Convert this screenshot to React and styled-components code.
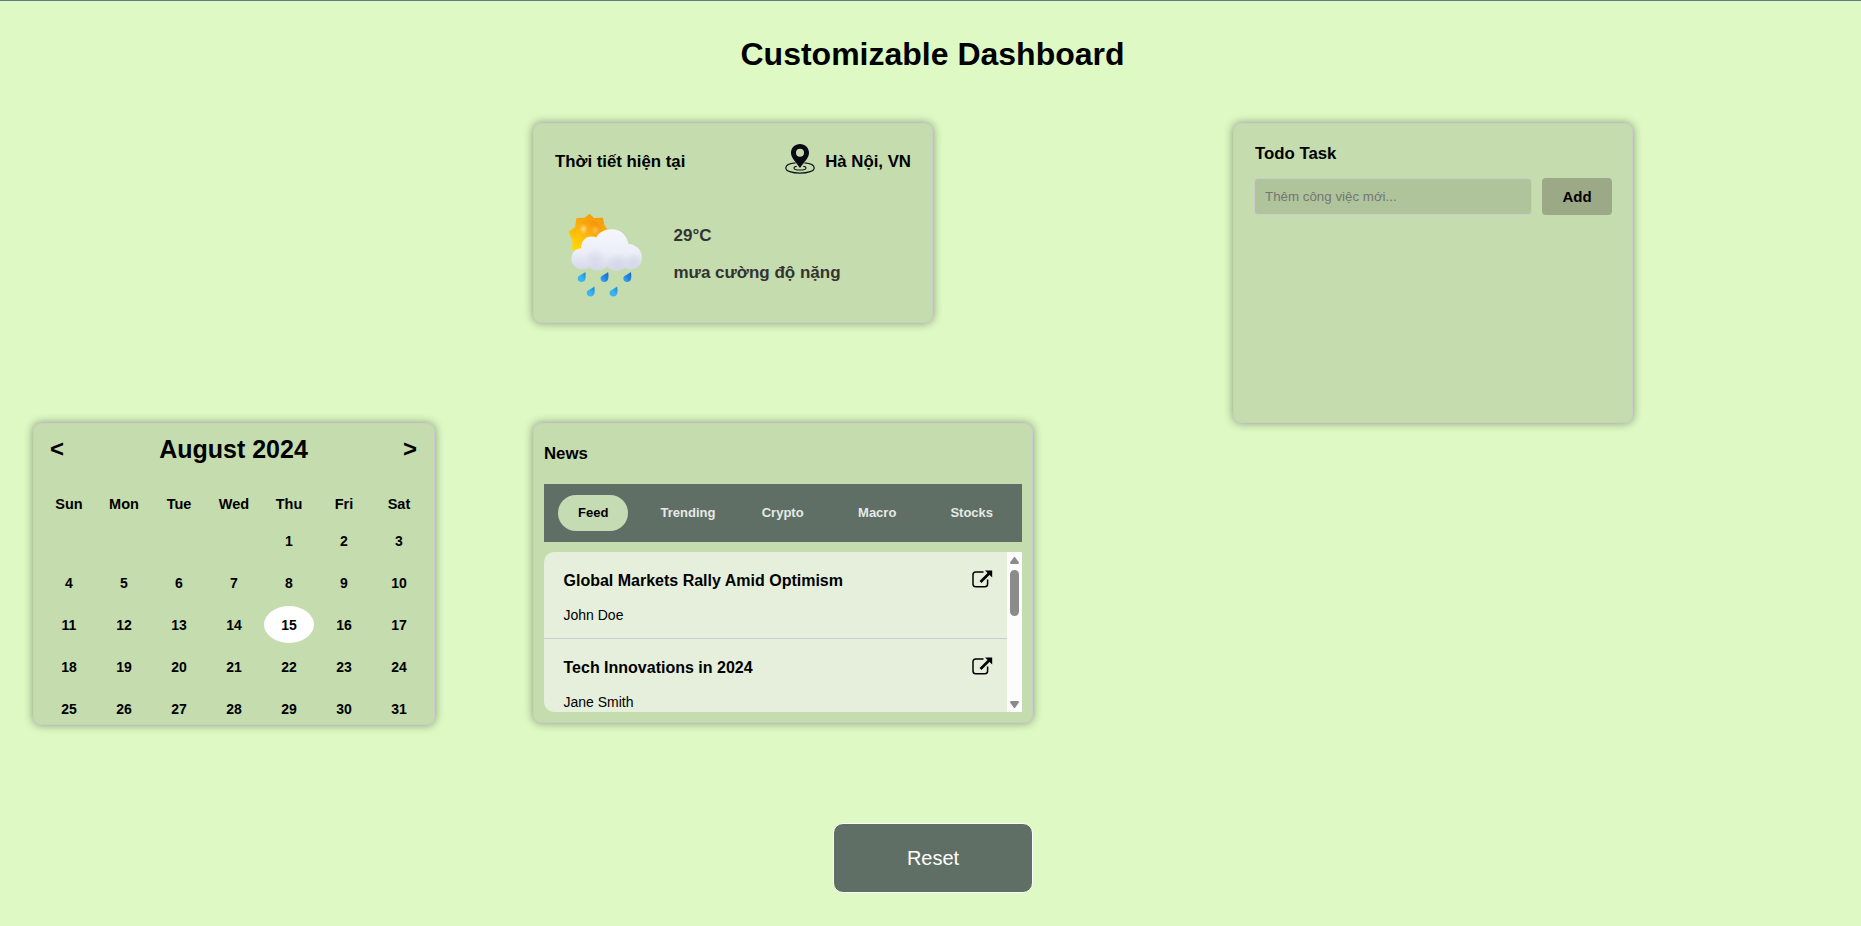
import React from "react";
import styled, { createGlobalStyle } from "styled-components";

const GlobalStyle = createGlobalStyle`
  *, *::before, *::after { box-sizing: border-box; }
  body {
    margin: 0;
    background: #def9c4;
    color: #000;
    font-family: "Liberation Sans", Arial, sans-serif;
    overflow: hidden;
  }
  h1, h2, h3, p { margin: 0; }
  button, input { font-family: inherit; }
`;

const Page = styled.main`
  display: flex;
  flex-direction: column;
  align-items: center;
  width: 1861px;
  height: 926px;
  padding: 0 28px 0 33px;
  border-top: 1px solid #5f7f85;
`;

const PageTitle = styled.h1`
  margin-top: 35px;
  padding-right: 1px;
  font-size: 32px;
  line-height: 37px;
`;

const Board = styled.section`
  display: grid;
  grid-template-columns: repeat(18, 100px);
  grid-template-rows: repeat(6, 100px);
  width: 1800px;
  margin-top: 50px;
`;

const Card = styled.article`
  grid-column: ${(p) => p.$col} / span ${(p) => p.$w};
  grid-row: ${(p) => p.$row} / span ${(p) => p.$h};
  display: flex;
  flex-direction: column;
  padding: ${(p) => p.$pad || "20px"};
  background: #c5dcae;
  border: 1px solid #ccc;
  border-radius: 8px;
  box-shadow: 0 0 10px rgba(0, 0, 0, 0.4);
  overflow: hidden;
`;

const CardTitle = styled.h3`
  font-size: 16.8px;
  line-height: 20px;
  padding-left: ${(p) => (p.$inset ? "1px" : "0")};
`;

const WeatherHeader = styled.header`
  display: flex;
  align-items: center;
  justify-content: space-between;
  height: 30px;
  padding-left: 1px;
`;

const Place = styled.div`
  display: flex;
  align-items: center;
  gap: 10px;
  padding-right: 1px;
`;

const WeatherTitle = styled(CardTitle)`
  padding-top: 5px;
`;

const WeatherBody = styled.div`
  display: flex;
  align-items: flex-start;
  gap: 28.5px;
  padding: 39px 0 0 14px;
`;

const Readings = styled.div`
  display: flex;
  flex-direction: column;
  gap: 17px;
  padding-top: 13px;
  color: #333;
  font-size: 17px;
  font-weight: 700;
  line-height: 20px;
`;

const TodoForm = styled.div`
  display: flex;
  gap: 10px;
  margin-top: 14px;
`;

const TodoInput = styled.input`
  width: 278px;
  height: 37px;
  padding: 0 10px;
  border: 1px solid #ccc;
  border-radius: 4px;
  background: #afc49b;
  font-size: 13.333px;
  outline: none;
  &::placeholder { color: #757575; opacity: 1; }
`;

const AddButton = styled.button`
  width: 70px;
  height: 37px;
  padding: 0;
  border: 0;
  border-radius: 4px;
  background: #9ca986;
  color: #000;
  font-size: 15px;
  font-weight: 700;
`;

const CalendarCard = styled(Card)`
  width: 402px;
  height: 302px;
`;

const MonthBar = styled.header`
  display: flex;
  align-items: center;
  justify-content: space-between;
  flex: none;
  height: 50px;
  padding: 0 7px 0 6px;
`;

const MonthName = styled.h2`
  font-size: 25px;
  line-height: 30px;
`;

const Arrow = styled.button`
  padding: 0;
  border: 0;
  background: none;
  color: #000;
  font-size: 24px;
  font-weight: 700;
`;

const Week = styled.div`
  display: grid;
  grid-template-columns: repeat(7, 50px);
  column-gap: 5px;
  flex: none;
  margin-top: ${(p) => (p.$head ? "11px" : "0")};
  margin-bottom: ${(p) => (p.$head ? "0" : "5px")};
`;

const Day = styled.div`
  display: flex;
  align-items: center;
  justify-content: center;
  height: 37px;
  border-radius: 50%;
  background: ${(p) => (p.$today ? "#fff" : "transparent")};
  font-size: ${(p) => (p.$label ? "14.5px" : "14px")};
  font-weight: 700;
`;

const Tabs = styled.nav`
  display: grid;
  grid-template-columns: repeat(5, 1fr);
  align-items: center;
  justify-items: center;
  flex: none;
  height: 58px;
  margin-top: 20px;
  padding: 0 3px 0 2px;
  background: #5f6f65;
`;

const Tab = styled.button`
  height: 36px;
  padding: 0 20px 2px;
  border: 0;
  border-radius: 20px;
  background: ${(p) => (p.$active ? "#c5dbb4" : "transparent")};
  color: ${(p) => (p.$active ? "#000" : "#e6e9e5")};
  font-size: 13px;
  font-weight: 700;
`;

const Feed = styled.div`
  display: flex;
  flex: none;
  height: 160px;
  margin-top: 10px;
  border-radius: 10px 0 0 10px;
  background: #e6efdc;
  overflow: hidden;
`;

const Stories = styled.div`
  flex: 1;
`;

const Story = styled.div`
  display: flex;
  justify-content: space-between;
  height: 87px;
  padding: 18px 14px 0 19.5px;
  border-bottom: 1px solid #ccc;
`;

const StoryTitle = styled.h3`
  padding-top: 1px;
  font-size: 16px;
  line-height: 20px;
`;

const Author = styled.p`
  margin-top: 16px;
  font-size: 14px;
  line-height: 16px;
`;

const Scrollbar = styled.div`
  display: flex;
  flex-direction: column;
  align-items: center;
  width: 15px;
  padding: 5px 0 4px;
  background: #fcfcfc;
`;

const Thumb = styled.div`
  width: 9px;
  height: 46px;
  margin: 6px 0 auto;
  border-radius: 5px;
  background: #8b8b8b;
`;

const ResetButton = styled.button`
  flex: none;
  width: 200px;
  height: 70px;
  margin-top: 100px;
  border: 1px solid #fff;
  border-radius: 10px;
  background: #5f6f65;
  color: #fff;
  font-size: 20px;
`;

const PinIcon = () => (
  <svg width="30" height="30" viewBox="0 0 30 30" fill="none">
    <path
      d="M10.500 18.800C4.500 19.300.8 21.300.8 23.900c0 3 6.200 5.300 14.200 5.300s14.200-2.300 14.200-5.300c0-2.600-3.700-4.600-9.700-5.100"
      stroke="#10121c"
      strokeWidth="1.200"
    />
    <path d="M11.800 22.200c-1.700.3-2.800 1-2.800 1.700 0 1.200 2.600 2.100 6 2.100s6-.9 6-2.100c0-.7-1.100-1.400-2.800-1.700" stroke="#10121c" strokeWidth="1.100" />
    <path
      fillRule="evenodd"
      fill="#080914"
      d="M15 0c5 0 9 3.900 9 8.800 0 5.200-4.800 9-9 15.200C10.800 17.800 6 14 6 8.800 6 3.900 10 0 15 0Zm0 4.700a4 4 0 1 0 0 8 4 4 0 0 0 0-8Z"
    />
  </svg>
);

const Drop = ({ x, y, dark }) => (
  <path
    transform={`translate(${x} ${y})`}
    fill={dark ? "url(#dropDark)" : "url(#dropLight)"}
    d="M7.600 0c.5 3 .6 5.300 0 7.200A4 4 0 0 1 3.800 10C1.500 10 0 8.500 0 6.400 0 3.600 4.300 2.700 7.600 0Z"
  />
);

const RainIcon = () => (
  <svg width="77" height="86" viewBox="0 0 77 86">
    <defs>
      <linearGradient id="sun" x1="0.7" y1="0" x2="0.2" y2="1">
        <stop offset="0" stopColor="#f59a08" />
        <stop offset="0.5" stopColor="#fbb40c" />
        <stop offset="1" stopColor="#ffe000" />
      </linearGradient>
      <linearGradient id="sunCore" x1="0.9" y1="0.1" x2="0.2" y2="1">
        <stop offset="0" stopColor="#f59207" />
        <stop offset="0.5" stopColor="#fbb010" />
        <stop offset="1" stopColor="#fdd002" />
      </linearGradient>
      <radialGradient id="glint">
        <stop offset="0" stopColor="#ffe9b8" stopOpacity="0.8" />
        <stop offset="1" stopColor="#ffd36b" stopOpacity="0" />
      </radialGradient>
      <linearGradient id="cloud" x1="0" y1="0" x2="0" y2="1">
        <stop offset="0" stopColor="#f6f7fd" />
        <stop offset="0.55" stopColor="#eceef8" />
        <stop offset="1" stopColor="#d3d6e6" />
      </linearGradient>
      <radialGradient id="shade">
        <stop offset="0" stopColor="#c3c8db" stopOpacity="0.35" />
        <stop offset="1" stopColor="#c3c8db" stopOpacity="0" />
      </radialGradient>
      <linearGradient id="dropLight" x1="1" y1="0" x2="0" y2="1">
        <stop offset="0" stopColor="#1b7fd6" />
        <stop offset="0.5" stopColor="#37b1ee" />
        <stop offset="1" stopColor="#3fbcf0" />
      </linearGradient>
      <linearGradient id="dropDark" x1="1" y1="0" x2="0" y2="1">
        <stop offset="0" stopColor="#1d62c9" />
        <stop offset="0.5" stopColor="#1f86e2" />
        <stop offset="1" stopColor="#41b0ee" />
      </linearGradient>
    </defs>
    <path
      fill="url(#sun)"
      d="M21.500.8 26 5l9-.3 1.300 7L41 19l-4.500 7 1 8.500-9 1.500-6 5-8-3-10.500-1 .6-8.500L.8 18.700 7 14l1.500-9 8-.3Z"
    />
    <circle cx="21" cy="20" r="13" fill="url(#sunCore)" />
    <ellipse cx="15.500" cy="16" rx="4.500" ry="5.500" fill="url(#glint)" />
    <ellipse cx="27.500" cy="17" rx="5" ry="5" fill="url(#glint)" opacity="0.5" />
    <path
      fill="url(#cloud)"
      d="M14 56.300C7.500 56 3.400 51.500 3.400 46c0-6 4-10.300 9.600-10.700C13 28 17.500 23.400 23.500 23.400c1.700 0 3.300.3 4.600 1C31 19.300 36.500 16.200 43.500 16.200c8.800 0 15.500 6 17 14.900 7.500.2 13.500 6.400 13.500 13.600 0 6.800-4.600 11.500-11 11.500-2.200 0-4.300-.6-6-1.500-2.300 2-5 3.200-8.500 3.200-4 0-7.300-1.600-9.500-4.300-2.300 2.500-5.500 3.900-9.500 3.900-3.300 0-6-1.300-8-3.200-2.200 1.400-4.800 2.100-7.500 2Z"
    />
    <ellipse cx="27" cy="45" rx="10" ry="11" fill="url(#shade)" />
    <ellipse cx="50" cy="49" rx="11" ry="9" fill="url(#shade)" />
    <ellipse cx="66" cy="48" rx="9" ry="8" fill="url(#shade)" />
    <Drop x={9.700} y={59} />
    <Drop x={32.500} y={59} dark />
    <Drop x={55.300} y={59} dark />
    <Drop x={18.700} y={73.500} />
    <Drop x={41.500} y={73.500} />
  </svg>
);

const OpenIcon = () => (
  <svg width="21" height="19" viewBox="0 0 21 19" fill="none">
    <path
      d="M11.500 2H3.800A2.800 2.800 0 0 0 1 4.800V14A2.800 2.800 0 0 0 3.800 16.800h9A2.800 2.800 0 0 0 15.600 14V9.500"
      stroke="#000"
      strokeWidth="1.500"
    />
    <path d="M8.500 12 17 3.500" stroke="#000" strokeWidth="2.700" />
    <path d="M13 .4h7.200v7.200Z" fill="#000" />
  </svg>
);

const ScrollArrow = ({ down }) => (
  <svg width="9" height="7" viewBox="0 0 9 7">
    <path fill="#8b8b8b" d={down ? "M.6 0h7.800L9 1.500 5.500 6.300a1.200 1.200 0 0 1-2 0L0 1.500Z" : "M.6 7h7.800L9 5.500 5.500.7a1.200 1.200 0 0 0-2 0L0 5.500Z"} />
  </svg>
);

const weekdays = ["Sun", "Mon", "Tue", "Wed", "Thu", "Fri", "Sat"];
const weeks = [0, 1, 2, 3, 4].map((w) => weekdays.map((_, d) => w * 7 + d - 3));
const tabs = ["Feed", "Trending", "Crypto", "Macro", "Stocks"];
const stories = [
  { title: "Global Markets Rally Amid Optimism", author: "John Doe" },
  { title: "Tech Innovations in 2024", author: "Jane Smith" },
];

export default function App() {
  return (
    <Page>
      <GlobalStyle />
      <PageTitle>Customizable Dashboard</PageTitle>
      <Board>
        <Card $col={6} $w={4} $row={1} $h={2}>
          <WeatherHeader>
            <WeatherTitle>Thời tiết hiện tại</WeatherTitle>
            <Place>
              <PinIcon />
              <WeatherTitle>Hà Nội, VN</WeatherTitle>
            </Place>
          </WeatherHeader>
          <WeatherBody>
            <RainIcon />
            <Readings>
              <p>29°C</p>
              <p>mưa cường độ nặng</p>
            </Readings>
          </WeatherBody>
        </Card>

        <Card $col={13} $w={4} $row={1} $h={3}>
          <CardTitle $inset>Todo Task</CardTitle>
          <TodoForm>
            <TodoInput placeholder="Thêm công việc mới..." />
            <AddButton>Add</AddButton>
          </TodoForm>
        </Card>

        <CalendarCard $col={1} $w={4} $row={4} $h={3} $pad="0 10px">
          <MonthBar>
            <Arrow>&lt;</Arrow>
            <MonthName>August 2024</MonthName>
            <Arrow>&gt;</Arrow>
          </MonthBar>
          <Week $head>
            {weekdays.map((d) => (
              <Day key={d} $label>{d}</Day>
            ))}
          </Week>
          {weeks.map((week) => (
            <Week key={week[6]}>
              {week.map((n) => (
                <Day key={n} $today={n === 15}>
                  {n > 0 ? n : ""}
                </Day>
              ))}
            </Week>
          ))}
        </CalendarCard>

        <Card $col={6} $w={5} $row={4} $h={3} $pad="20px 10px 10px">
          <CardTitle>News</CardTitle>
          <Tabs>
            {tabs.map((t) => (
              <Tab key={t} $active={t === "Feed"}>
                {t}
              </Tab>
            ))}
          </Tabs>
          <Feed>
            <Stories>
              {stories.map((s) => (
                <Story key={s.title}>
                  <div>
                    <StoryTitle>{s.title}</StoryTitle>
                    <Author>{s.author}</Author>
                  </div>
                  <OpenIcon />
                </Story>
              ))}
            </Stories>
            <Scrollbar>
              <ScrollArrow />
              <Thumb />
              <ScrollArrow down />
            </Scrollbar>
          </Feed>
        </Card>
      </Board>
      <ResetButton>Reset</ResetButton>
    </Page>
  );
}
